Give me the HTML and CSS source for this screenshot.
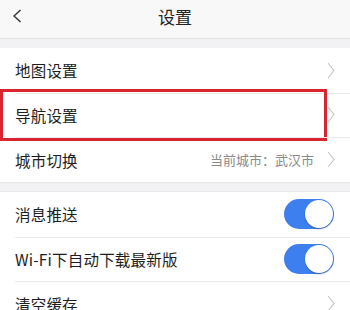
FILE: index.html
```html
<!DOCTYPE html>
<html lang="zh">
<head>
<meta charset="utf-8">
<link rel="stylesheet" href="styles.css">
</head>
<body>
<div class="page">
  <header class="topbar">
    <span class="back"><svg width="10" height="14" viewBox="0 0 10 14"><path d="M8.5 1 L2 7 L8.5 13" fill="none" stroke="#333" stroke-width="1.4"/></svg></span>
    <span class="title">设置</span>
  </header>
  <div class="gap"></div>
  <ul class="group">
    <li class="row"><span class="label">地图设置</span><svg class="chev" width="8" height="17" viewBox="0 0 8 17"><path d="M1 1 L7 8.5 L1 16" fill="none" stroke="#c4c4c8" stroke-width="1.1"/></svg></li>
    <li class="row highlight"><span class="label">导航设置</span><svg class="chev" width="8" height="17" viewBox="0 0 8 17"><path d="M1 1 L7 8.5 L1 16" fill="none" stroke="#c4c4c8" stroke-width="1.1"/></svg></li>
    <li class="row"><span class="label">城市切换</span><span class="value">当前城市：武汉市</span><svg class="chev" width="8" height="17" viewBox="0 0 8 17"><path d="M1 1 L7 8.5 L1 16" fill="none" stroke="#c4c4c8" stroke-width="1.1"/></svg></li>
  </ul>
  <div class="gap gap2"></div>
  <ul class="group">
    <li class="row"><span class="label">消息推送</span><span class="toggle"><span class="knob"></span></span></li>
    <li class="row"><span class="label">Wi-Fi下自动下载最新版</span><span class="toggle"><span class="knob"></span></span></li>
    <li class="row"><span class="label">清空缓存</span><svg class="chev" width="8" height="17" viewBox="0 0 8 17"><path d="M1 1 L7 8.5 L1 16" fill="none" stroke="#c4c4c8" stroke-width="1.1"/></svg></li>
  </ul>
</div>
</body>
</html>
```

FILE: styles.css
```css
* { box-sizing: border-box; }
html, body { margin: 0; padding: 0; }
body {
  width: 350px;
  height: 310px;
  overflow: hidden;
  background: #f2f2f4;
  font-family: "Noto Sans CJK SC", "Noto Sans", sans-serif;
  color: #222;
}
.topbar {
  height: 39px;
  background: #f8f8f8;
  border-bottom: 1px solid #e2e2e2;
  display: flex;
  align-items: center;
  justify-content: center;
  position: relative;
  padding-bottom: 5px;
}
.back {
  position: absolute;
  left: 12px;
  top: 9px;
  width: 10px;
  height: 14px;
  display: block;
}
.back svg { display: block; }
.title {
  font-size: 17px;
  line-height: 20px;
  color: #222;
}
.gap { height: 9px; }
.gap2 { height: 10px; border-top: 1px solid #e8e8e8; border-bottom: 1px solid #e8e8e8; }
.group {
  list-style: none;
  margin: 0;
  padding: 0;
  background: #fff;
}
.row {
  height: 44.67px;
  display: flex;
  align-items: center;
  padding: 0 15px;
  position: relative;
}
.row + .row::before {
  content: "";
  position: absolute;
  left: 15px;
  right: 0;
  top: 0;
  height: 1px;
  background: #ebebeb;
}
.label {
  flex: 1;
  font-size: 15.5px;
  color: #1e1e1e;
  letter-spacing: 0.2px;
}
.value {
  font-size: 13px;
  color: #8a8a8a;
  margin-right: 13px;
}
.chev {
  display: block;
  margin-right: 0;
}
.highlight::after {
  content: "";
  position: absolute;
  left: 0;
  top: -4px;
  width: 321px;
  height: 46px;
  border: 3px solid #d9252f;
}
.toggle {
  width: 50px;
  height: 30px;
  border-radius: 15px;
  background: #3e7ff0;
  position: relative;
  margin-right: 1px;
}
.knob {
  position: absolute;
  right: 1px;
  top: 1px;
  width: 28px;
  height: 28px;
  border-radius: 50%;
  background: #fff;
  box-shadow: 0 1px 2px rgba(0,0,0,0.3);
}
```
